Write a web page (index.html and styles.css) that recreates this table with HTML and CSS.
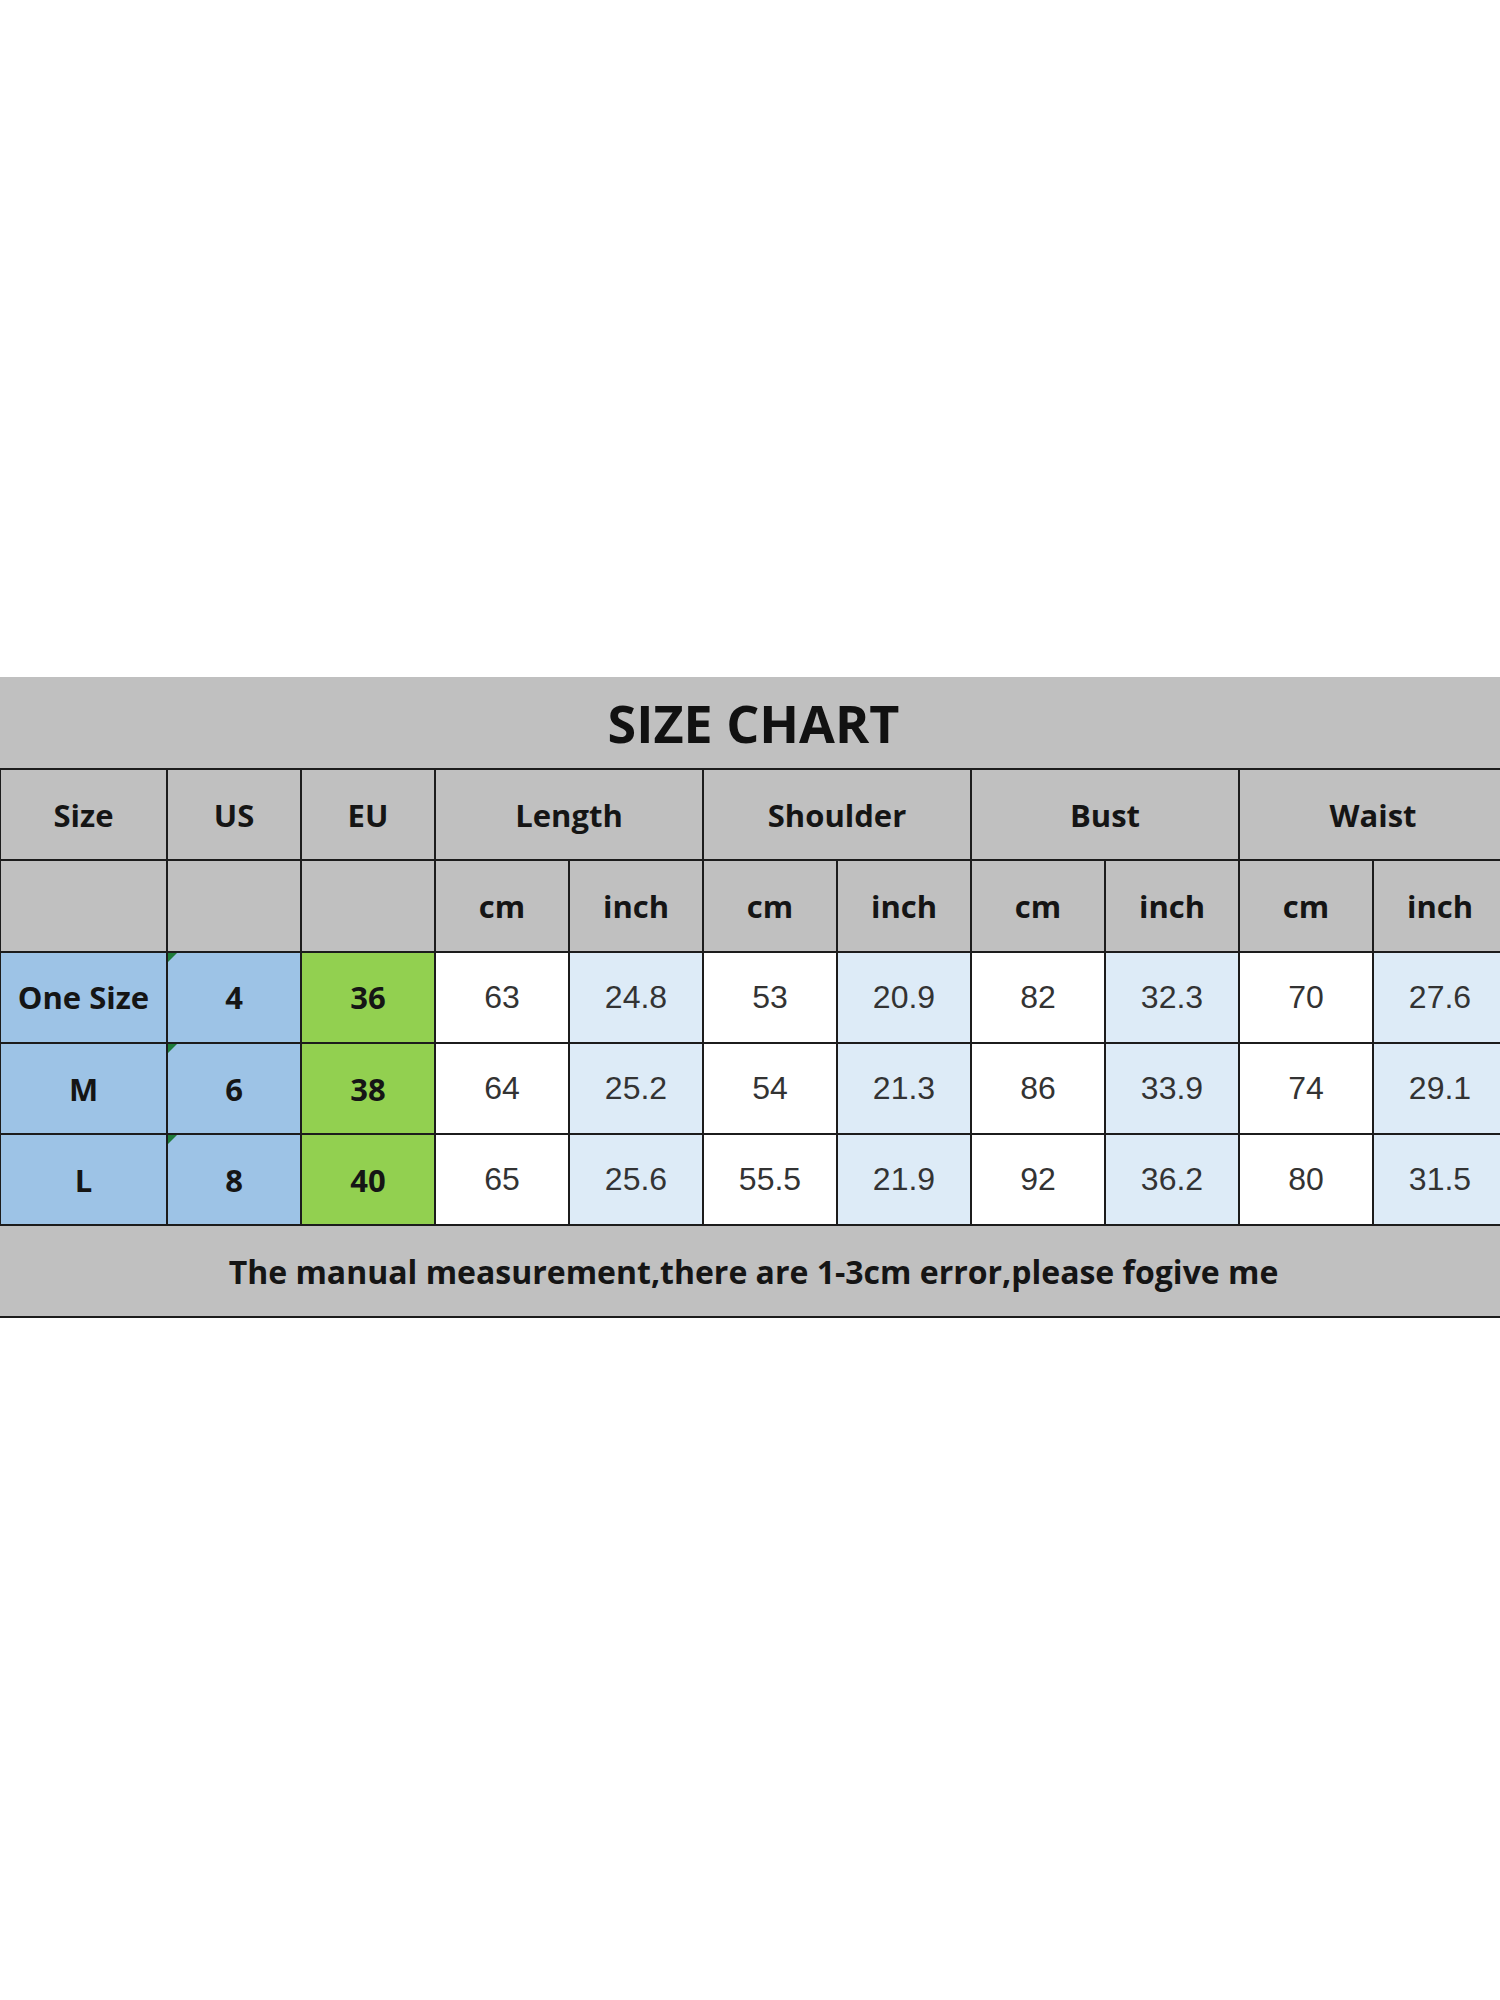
FILE: index.html
```html
<!DOCTYPE html>
<html lang="en">
<head>
<meta charset="utf-8">
<title>Size Chart</title>
<link rel="stylesheet" href="styles.css">
</head>
<body>
<div class="page">
  <div class="frame">
    <table class="chart">
      <colgroup>
        <col class="c-size"><col class="c-us"><col class="c-eu">
        <col class="c-m"><col class="c-m"><col class="c-m"><col class="c-m">
        <col class="c-m"><col class="c-m"><col class="c-m"><col class="c-m">
      </colgroup>
      <tr class="title-row"><td colspan="11" class="title">SIZE CHART</td></tr>
      <tr class="head-row">
        <td class="hd">Size</td><td class="hd">US</td><td class="hd">EU</td>
        <td class="hd" colspan="2">Length</td>
        <td class="hd" colspan="2">Shoulder</td>
        <td class="hd" colspan="2">Bust</td>
        <td class="hd" colspan="2">Waist</td>
      </tr>
      <tr class="head-row">
        <td class="hd"></td><td class="hd"></td><td class="hd"></td>
        <td class="hd">cm</td><td class="hd">inch</td>
        <td class="hd">cm</td><td class="hd">inch</td>
        <td class="hd">cm</td><td class="hd">inch</td>
        <td class="hd">cm</td><td class="hd">inch</td>
      </tr>
      <tr class="data-row">
        <td class="sz">One Size</td><td class="us">4</td><td class="eu">36</td>
        <td class="cm">63</td><td class="in">24.8</td>
        <td class="cm">53</td><td class="in">20.9</td>
        <td class="cm">82</td><td class="in">32.3</td>
        <td class="cm">70</td><td class="in">27.6</td>
      </tr>
      <tr class="data-row">
        <td class="sz">M</td><td class="us">6</td><td class="eu">38</td>
        <td class="cm">64</td><td class="in">25.2</td>
        <td class="cm">54</td><td class="in">21.3</td>
        <td class="cm">86</td><td class="in">33.9</td>
        <td class="cm">74</td><td class="in">29.1</td>
      </tr>
      <tr class="data-row">
        <td class="sz">L</td><td class="us">8</td><td class="eu">40</td>
        <td class="cm">65</td><td class="in">25.6</td>
        <td class="cm">55.5</td><td class="in">21.9</td>
        <td class="cm">92</td><td class="in">36.2</td>
        <td class="cm">80</td><td class="in">31.5</td>
      </tr>
      <tr class="foot-row"><td colspan="11" class="note">The manual measurement,there are 1-3cm error,please fogive me</td></tr>
    </table>
  </div>
</div>
</body>
</html>
```
FILE: styles.css
```css
html, body {
  margin: 0;
  padding: 0;
  background: #ffffff;
}
.page {
  width: 1500px;
  height: 2000px;
  overflow: hidden;
  padding-top: 677px;
  box-sizing: border-box;
}
.frame {
  width: 1500px;
  overflow: hidden;
}
.chart {
  width: 1508px;
  margin-left: -1px;
  table-layout: fixed;
  border-collapse: collapse;
  font-family: "Open Sans", "Liberation Sans", sans-serif;
  color: #111;
}
.c-size { width: 167px; }
.c-us { width: 134px; }
.c-eu { width: 134px; }
.c-m { width: 134px; }
.chart td {
  border: 2px solid #1c1c1c;
  text-align: center;
  vertical-align: middle;
  padding: 0;
  position: relative;
}
.title-row td {
  height: 91px;
  border-top: none;
  border-left: none;
  border-right: none;
}
.title {
  background: #c0c0c0;
  font-size: 52px;
  font-weight: 700;
  padding-top: 4px;
}
.head-row td { height: 89.3px; }
.hd {
  background: #c0c0c0;
  font-size: 31px;
  font-weight: 700;
  color: #151515;
}
.data-row td {
  height: 89.3px;
  font-family: "Liberation Sans", Arial, sans-serif;
  font-size: 32px;
  color: #333;
}
.data-row .sz, .data-row .us, .data-row .eu {
  font-family: "Open Sans", "Liberation Sans", sans-serif;
  font-weight: 700;
  font-size: 31px;
  color: #151515;
}
.sz { background: #9dc3e6; }
.us { background: #9dc3e6; }
.us::before {
  content: "";
  position: absolute;
  left: 0;
  top: 0;
  border-top: 9px solid #1e7b3a;
  border-right: 9px solid transparent;
}
.eu { background: #92d050; }
.cm { background: #ffffff; }
.in { background: #ddebf7; }
.foot-row td {
  height: 89.3px;
  border-left: none;
  border-right: none;
}
.note {
  background: #c0c0c0;
  font-size: 32px;
  font-weight: 700;
  color: #151515;
}
```
